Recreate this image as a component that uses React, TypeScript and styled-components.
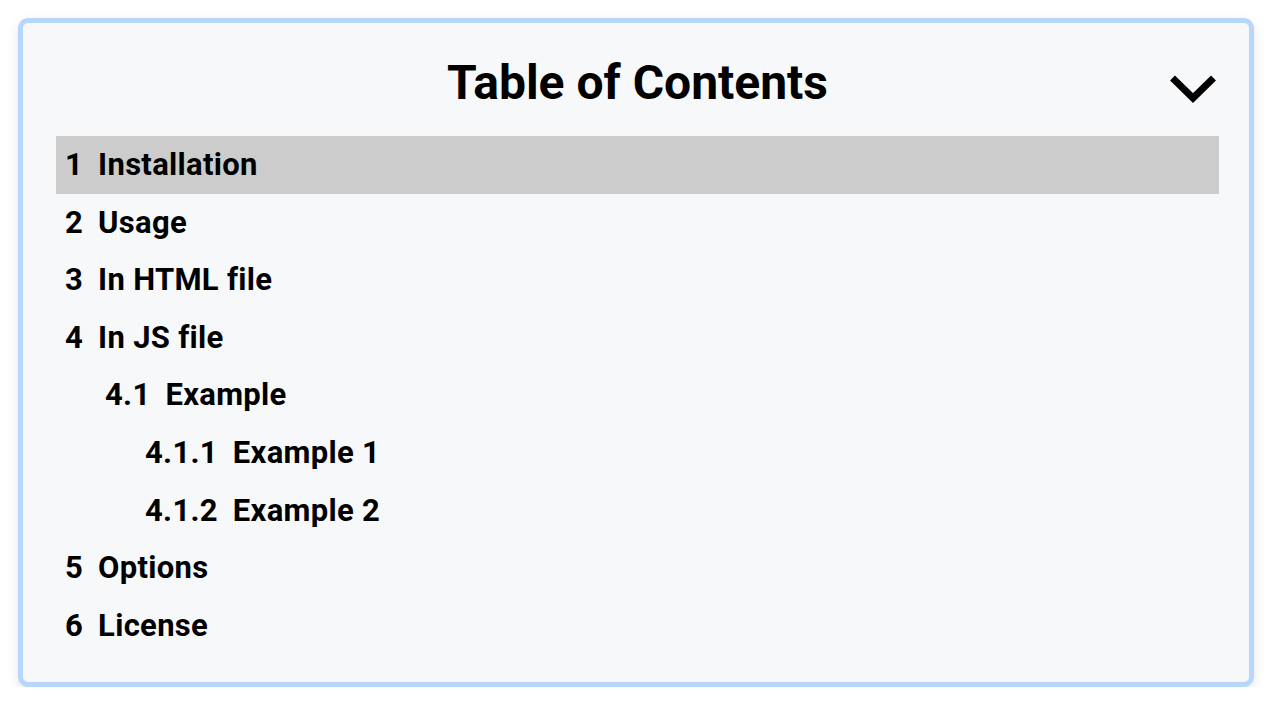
import styled, { createGlobalStyle } from "styled-components";

interface TocItem {
  num: string;
  title: string;
  depth: number;
}

const items: TocItem[] = [
  { num: "1", title: "Installation", depth: 0 },
  { num: "2", title: "Usage", depth: 0 },
  { num: "3", title: "In HTML file", depth: 0 },
  { num: "4", title: "In JS file", depth: 0 },
  { num: "4.1", title: "Example", depth: 1 },
  { num: "4.1.1", title: "Example 1", depth: 2 },
  { num: "4.1.2", title: "Example 2", depth: 2 },
  { num: "5", title: "Options", depth: 0 },
  { num: "6", title: "License", depth: 0 },
];

export default function App() {
  return (
    <>
      <GlobalStyle />
      <Card>
        <Header>
          <span />
          <Title>Table of Contents</Title>
          <Toggle aria-label="Collapse">
            <svg width="48" height="32" viewBox="0 0 48 32">
              <path
                d="M3.5 5 L24 25 L44.5 5"
                fill="none"
                stroke="#000"
                strokeWidth="7"
              />
            </svg>
          </Toggle>
        </Header>
        <List>
          {items.map((item, i) => (
            <Row key={item.num} $depth={item.depth} $active={i === 0}>
              <span>{item.num}</span>
              <span>{item.title}</span>
            </Row>
          ))}
        </List>
      </Card>
    </>
  );
}

const GlobalStyle = createGlobalStyle`
  body {
    margin: 0;
    background: #fff;
    font-family: Roboto, "Liberation Sans", sans-serif;
  }
`;

const Card = styled.section`
  margin: 18px 18px 0;
  padding: 26px 30px 28px 33px;
  border: 5px solid #b6d6fb;
  border-radius: 10px;
  background: #f7f8fa;
  box-shadow: 0 4px 12px rgba(0, 0, 0, 0.1);
`;

const Header = styled.div`
  display: grid;
  grid-template-columns: 1fr auto 1fr;
  align-items: center;
  margin-bottom: 20px;
`;

const Title = styled.h2`
  margin: 0;
  font-size: 48px;
  font-weight: 700;
  color: #000;
  line-height: 67px;
`;

const Toggle = styled.button`
  justify-self: end;
  display: flex;
  padding: 0;
  margin: 12px 2px 0 0;
  border: none;
  background: none;
  cursor: pointer;
`;

const List = styled.ol`
  margin: 0;
  padding: 0;
  list-style: none;
`;

const Row = styled.li<{ $depth: number; $active: boolean }>`
  display: flex;
  gap: 15px;
  padding-left: ${(p) => 9 + p.$depth * 40}px;
  font-size: 31px;
  letter-spacing: 0.3px;
  font-weight: 700;
  line-height: 57.6px;
  color: #000;
  background: ${(p) => (p.$active ? "#cccccc" : "transparent")};
`;
